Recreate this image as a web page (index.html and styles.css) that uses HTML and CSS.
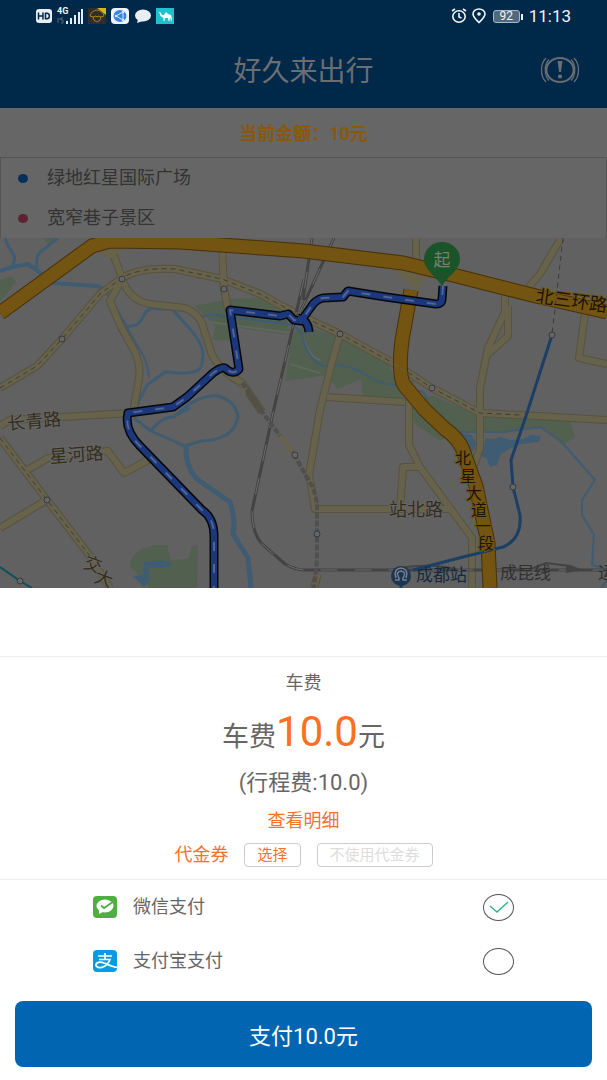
FILE: index.html
```html
<!DOCTYPE html>
<html lang="zh-CN">
<head>
    <meta charset="utf-8">
    <meta name="viewport" content="width=device-width, initial-scale=1">
    <title>好久来出行</title>
    <link rel="stylesheet" href="styles.css">
</head>
<body>
    <header class="top">
        <div class="status">
            <div class="status-left">
                <svg width="16" height="14" viewBox="0 0 16 14"><rect width="16" height="14" rx="3" fill="#e9eef3"/><path d="M2.5 3.5v7M7 3.5v7M2.5 7H7M9.5 4.2v5.6h1.3c3.4 0 3.4-5.6 0-5.6z" fill="none" stroke="#002848" stroke-width="1.5"/></svg>
                <div class="signal">
                    <span class="net">4G</span>
                    <svg width="26" height="15" viewBox="0 0 26 15"><path d="M10 15v-3M14 15V9M18 15V6M22 15V3M25 15V0" stroke="#e9eef3" stroke-width="2"/><path d="M1 9v5M3 9v2M6 9H4v2h2v3H4" fill="none" stroke="#53677a"/></svg>
                </div>
                <svg width="18" height="16" viewBox="0 0 18 16"><rect width="18" height="16" fill="#302d2b"/><path d="M9 0h9v7z" fill="#d9b51c"/><path d="M2 8q1-5 7-6 6 1 7 6l-3 1q0 4-4 5-4-1-4-5zM5 9l3-1 1 1 1-1 3 1" fill="none" stroke="#a8811d"/></svg>
                <svg width="18" height="16" viewBox="0 0 18 16"><rect width="18" height="16" rx="4" fill="#f1f5fb"/><ellipse cx="9" cy="8" rx="6.500" ry="6" fill="#3a83e8"/><path d="M5 8l7-4v8z" fill="none" stroke="#d5e6ff"/><g fill="#d5e6ff"><circle cx="5" cy="8" r="1.300"/><circle cx="12" cy="4" r="1.300"/><circle cx="12" cy="12" r="1.300"/></g></svg>
                <svg width="17" height="15" viewBox="0 0 17 15"><ellipse cx="9" cy="6.500" rx="8" ry="6" fill="#e9eef3"/><path d="M4 10l-1 4 6-2z" fill="#e9eef3"/></svg>
                <svg width="18" height="16" viewBox="0 0 18 16"><rect width="18" height="16" fill="#1cc3cf"/><path d="M2 5l2-1 1 1 1 2 2 0 2-3 2 2 3 1 1 4-1 3-.500-4-1 1v2h-1l-.500-3-3 0-.500 3h-1l0-3-3-2-1-3z" fill="#fff"/></svg>
            </div>
            <div class="status-right">
                <svg width="16" height="16" viewBox="0 0 16 16" fill="none" stroke="#f2f5f8" stroke-width="1.600"><ellipse cx="8" cy="8.500" rx="6.200" ry="5.700"/><path d="M8 5v4l2.500 1M1 3l3-2M15 3l-3-2"/></svg>
                <svg width="14" height="16" viewBox="0 0 14 16"><path d="M7 14.500C4 11.500 1 9 1 6a6 5 0 0 1 12 0c0 3-3 5.500-6 8.500z" fill="none" stroke="#f2f5f8" stroke-width="1.600"/><circle cx="7" cy="6" r="1.800" fill="#f2f5f8"/></svg>
                <div class="battery">92</div>
                <time>11:13</time>
            </div>
        </div>
        <div class="titlebar">
            <h1>好久来出行</h1>
            <button class="alert" type="button" aria-label="安全提示">
                <svg width="40" height="28" viewBox="0 0 40 28"><g fill="none" stroke="#6a6e72"><ellipse cx="20" cy="14" rx="13.500" ry="12" stroke-width="1.800"/><path d="M6 2C0 8 0 20 6 26M9 3.500C4 9 4 19 9 24.500M34 2c6 6 6 18 0 24M31 3.500c5 5.500 5 15.500 0 21" stroke-width="1.300"/></g><path d="M17.500 5h5l-1.500 11h-2z" fill="#6a6e72"/><ellipse cx="20" cy="20.500" rx="2.200" ry="2" fill="#6a6e72"/></svg>
            </button>
        </div>
    </header>

    <p class="current">当前金额：10元</p>
    <ul class="stops">
        <li class="from">绿地红星国际广场</li>
        <li class="to">宽窄巷子景区</li>
    </ul>

    <svg class="map" viewBox="0 238 607 350" role="img" aria-label="行程路线">
        <!-- parks -->
        <g fill="#51604f">
            <path d="M195 306l35-7 33-1 22 12 5 25-56-8 4 14-25-1 2-14z"/>
            <path d="M293 333l10-7 37 11 46 24 12 22 5 16-40-1-2-19-24 10-9-14-43 6z"/>
            <path d="M405 400l28-4 30 13 20 7 87 4 5 17-12 8-23-18-37 5-43 0-20 9-26-18z"/>
            <path d="M130 566c0-14 16-22 37-21l4 15 17-1 4-13 6-1-1 43h-47z"/>
            <path d="M42 238h14l-6 7zM0 280l12-4 4 6-16 20z"/>
        </g>
        <path d="M209 322l82 11M290 364l30 9M303 336q6 22 18 24" fill="none" stroke="#606760" stroke-width="2"/>

        <!-- water -->
        <g fill="none" stroke="#3f5c72" stroke-linejoin="round">
            <path d="M0 271l12-4 16-3 10 7 14 12 46 3 10 8" stroke-width="4"/>
            <path d="M5 238q2 8 7 14t0 14M37 268q-2-14 6-18l15-12" stroke-width="3"/>
            <path d="M108 294l10 18 8 14q12 2 17-9t14-8h15l18 20q14 16 13 28t-6 14q-12 3-20 2t-12-1l-18 13-10 20" stroke-width="3"/>
            <path d="M126 326l14 24q8 12 9 28M200 317q14-4 22-1l66 8q14 4 16 18 6 20 20 24 22-4 42 9t40 9" stroke-width="2"/>
            <path d="M173 418q24-24 45-22 18 5 20 21-4 23-37 24l-16 5-34-15-17-13M151 431q10-14 22-14l17-9" stroke-width="3"/>
            <path d="M186 447q0 25 15 35l29 20q6 18 3 32l15 24 3 30" stroke-width="5"/>
            <path d="M412 392q12-4 14 5v8M460 432h43l37-5 20 13 35 40-13 20v15l12 20-2 30 15 4M607 581l-6 7" stroke-width="2"/>
        </g>
        <g fill="#3f5c72">
            <path d="M460 433l12 2 5 10-6 8zM486 438l8 1 6-2 10 3 13-1 8-4 10 1-2 6-18 2-12 5-9 6-3 10-7 2-3-8-6-3z"/>
            <path d="M133 576l10-1 1-13 17-2 11 3-2 4-22 1 2 12-6 7z"/>
        </g>

        <!-- streets -->
        <g fill="none" stroke="#57533f" stroke-width="8" stroke-linejoin="round">
            <path d="M0 388l37-22 25-27 38-45 22-16q18-11 53-9l47 10 38 15 37 20 43 20 55 30 37 24 48 25 40 2 87 5"/>
            <path d="M110 245l12 33q6 22 28 26l35 4q16 6 19 22l8 25q10 18 30 28l20 29"/>
            <path d="M122 279l-12 22 10 24 15 27q6 14 4 26l-6 35M222 246l2 42 4 22M0 426l10-6 52-3 68-4M27 470l21-12 60-7 16 22 26-14M0 528l45-27"/>
            <path d="M0 438l47 62 43 56 20 32"/>
            <path d="M340 334l-7 24-13 52-11 65 6 34h136M327 397l78 5M409 380v65l11 22 52 71v50M420 467h-17l-3 42"/>
            <path d="M416 238v30M561 238l-21 36-12 14M505 296v16l-17 36-8 40v60l-7 20M508 306v30l-20 18M585 314l-6 44 28 6M318 574l-4 14"/>
        </g>
        <g fill="none" stroke="#67624b" stroke-width="6" stroke-linejoin="round">
            <path d="M0 388l37-22 25-27 38-45 22-16q18-11 53-9l47 10 38 15 37 20 43 20 55 30 37 24 48 25 40 2 87 5"/>
            <path d="M110 245l12 33q6 22 28 26l35 4q16 6 19 22l8 25q10 18 30 28l4 11"/>
            <path d="M122 279l-12 22 10 24 15 27q6 14 4 26l-6 35M222 246l2 42 4 22M0 426l10-6 52-3 68-4M27 470l21-12 60-7 16 22 26-14M0 528l45-27"/>
            <path d="M0 438l47 62 43 56 20 32"/>
            <path d="M340 334l-7 24-13 52-11 65 6 34h136M327 397l78 5M409 380v65l11 22 52 71v50M420 467h-17l-3 42"/>
            <path d="M416 238v30M561 238l-21 36-12 14M505 296v16l-17 36-8 40v60l-7 20M508 306v30l-20 18M585 314l-6 44 28 6M318 574l-4 14"/>
        </g>
        <path d="M0 388l37-22 25-27 38-45 22-16q18-11 53-9l47 10 38 15 37 20 43 20 55 30 37 24 48 25 40 2M0 438l47 62 43 56" fill="none" stroke="#3d3c38" stroke-dasharray="5 4"/>

        <!-- railways -->
        <g fill="none" stroke="#434343" stroke-width="3">
            <path d="M312 238l-9 62M334 238l-33 72M304 279l-31 134-21 98q0 22 10 33l23 20q10 6 20 6h302"/>
            <path d="M390 570q35-8 65-1M528 570l18-7 24 3 10 4" stroke-width="2"/>
        </g>
        <path d="M312 238l-9 62M334 238l-33 72M304 279l-31 134-21 98q0 22 10 33l23 20q10 6 20 6h302" fill="none" stroke="#6c6c6c" stroke-dasharray="17 17"/>
        <path d="M566 566l18 4-18 3z" fill="#434343"/>
        <path d="M242 383l20 29 32 42 12 22q11 16 11 32v52l-3 28" fill="none" stroke="#4f4f4f" stroke-width="4" stroke-dasharray="6 2"/>
        <path d="M280 436l12 16" fill="none" stroke="#67624b" stroke-width="5"/>

        <!-- trunk roads -->
        <g fill="none" stroke-linejoin="round">
            <path d="M385 257l50 7-19 24zM92 244h36l-18 12z" fill="#67624b" stroke="#67624b" stroke-width="5"/>
            <path d="M0 313l92-67 18-5 70 1 124 9 99 12 50 12 83 21 71 16M411 290l-9 50q-4 35 2 45l21 25 20 19q16 11 20 27l11 30 12 57 2 45" stroke="#49300a" stroke-width="15"/>
            <path d="M0 313l92-67 18-5 70 1 124 9 99 12 50 12 83 21 71 16M411 290l-9 50q-4 35 2 45l21 25 20 19q16 11 20 27l11 30 12 57 2 45" stroke="#735410" stroke-width="13"/>
            <path d="M394 364l14 9" stroke="#67624b" stroke-dasharray="5 3"/>
        </g>

        <!-- metro lines -->
        <g fill="none" stroke-width="3">
            <path d="M552 335l-26 81-15 44 2 27 7 28q2 24-17 32l-40 10-50 13M401 585v3" stroke="#1c3f66"/>
            <path d="M0 567l20 14 12 7" stroke="#0d505c" stroke-width="2"/>
            <path d="M563 238l-11 97" stroke="#3c3c3c" stroke-width="1" stroke-dasharray="5 4"/>
        </g>
        <g fill="#666" stroke="#353a42">
            <circle cx="122" cy="279" r="3"/><circle cx="62" cy="339" r="3"/><circle cx="224" cy="289" r="3"/><circle cx="340" cy="334" r="3"/>
            <circle cx="432" cy="388" r="3"/><circle cx="552" cy="335" r="3"/><circle cx="47" cy="500" r="3"/><circle cx="20" cy="581" r="3"/>
            <circle cx="295" cy="455" r="3"/><circle cx="317" cy="534" r="3"/><circle cx="513" cy="487" r="3"/>
        </g>

        <!-- driven route -->
        <g fill="none" stroke-linejoin="round">
            <path d="M443 286l-1 13q0 5-6 5l-50-7-38-6-5 6-20 1q-8 2-12 9l-10 14-7-1-6-6-8 2-50-6 9 59q-6 7-14-1-4-1-12 5l-26 24-14 10-45 6q-4 17 12 33l62 64q12 8 12 26v56M298 318q10 2 11 14" stroke="#05070c" stroke-width="9"/>
            <path d="M443 286l-1 13q0 5-6 5l-50-7-38-6-5 6-20 1q-8 2-12 9l-10 14-7-1-6-6-8 2-50-6 9 59q-6 7-14-1-4-1-12 5l-26 24-14 10-45 6q-4 17 12 33l62 64q12 8 12 26v56M298 318q10 2 11 14" stroke="#1b387c" stroke-width="6"/>
            <path d="M443 286l-1 13q0 5-6 5l-50-7-38-6-5 6-20 1q-8 2-12 9l-10 14-7-1-6-6-8 2-50-6 9 59q-6 7-14-1-4-1-12 5l-26 24-14 10-45 6q-4 17 12 33l62 64q12 8 12 26v56" stroke="#53648f" stroke-width="2" stroke-dasharray="9 13"/>
        </g>

        <!-- names -->
        <g class="road">
            <text x="8" y="430" transform="rotate(-5 8 430)">长青路</text>
            <text x="50" y="463" transform="rotate(-4 50 463)">星河路</text>
            <text x="389" y="516">站北路</text>
            <text x="84" y="571" transform="rotate(20 93 565)">交</text>
            <text x="95" y="585" transform="rotate(20 104 578)">大</text>
        </g>
        <g class="road trunk">
            <text x="535" y="302" transform="rotate(8 535 302)">北三环路</text>
        </g>
        <g class="road trunk stacked">
            <text x="463" y="464">北</text>
            <text x="468" y="482">星</text>
            <text x="474" y="499">大</text>
            <text x="479" y="516">道</text>
            <text x="483" y="532">一</text>
            <text x="486" y="549">段</text>
        </g>
        <text class="rail" x="500" y="579">成昆线</text>
        <text class="rail" x="598" y="579">运</text>
        <text class="station" x="416" y="581">成都站</text>
        <circle cx="401" cy="576" r="10" fill="#1b3552"/>
        <path d="M395 580h4v-2q-4-6 2-7 6 1 2 7v2h4M396 578q-3-9 5-10 8 1 5 10" fill="none" stroke="#777e87" stroke-width="1.500"/>

        <path d="M442 286c-6-10-18-16-18-27a18 17 0 0 1 36 0c0 11-12 17-18 27z" fill="#1b5429"/>
        <text class="pin" x="442" y="266">起</text>
    </svg>

    <form class="sheet">
        <section class="fare">
            <h2>车费</h2>
            <p class="total">车费<strong>10.0</strong>元</p>
            <p class="trip">(行程费:10.0)</p>
            <a class="detail" href="#">查看明细</a>
            <div class="coupon">
                <span>代金券</span>
                <button type="button">选择</button>
                <button type="button" class="off">不使用代金券</button>
            </div>
        </section>
        <section class="methods">
            <label class="method">
                <svg width="24" height="22" viewBox="0 0 24 22"><rect width="24" height="22" rx="4" fill="#4caf3f"/><ellipse cx="12" cy="10" rx="8.500" ry="6.500" fill="#fff"/><path d="M6 14v4l4-2z" fill="#fff"/><path d="M8 9.500l3 2.500 8-5.500" fill="none" stroke="#4caf3f" stroke-width="1.800"/></svg>
                <span class="name">微信支付</span>
                <span class="pick">
                    <input type="radio" name="pay" value="wechat" checked>
                    <svg width="20" height="12" viewBox="0 0 20 12"><path d="M1 5l7 6L19 1" fill="none" stroke="#2fb583" stroke-width="1.400"/></svg>
                </span>
            </label>
            <label class="method">
                <svg width="24" height="22" viewBox="0 0 24 22"><rect width="24" height="22" rx="4" fill="#0a9be6"/><path d="M5 6h14M12 3v6M6 9.500h11q-2 5-6 7c-4 2-8 1-8-1.500 0-3 4-3.500 8-2 4 1.500 7 3.500 13 4.500" fill="none" stroke="#fff" stroke-width="1.700"/></svg>
                <span class="name">支付宝支付</span>
                <span class="pick">
                    <input type="radio" name="pay" value="alipay">
                    <svg width="20" height="12" viewBox="0 0 20 12"><path d="M1 5l7 6L19 1" fill="none" stroke="#2fb583" stroke-width="1.400"/></svg>
                </span>
            </label>
        </section>
        <button class="pay" type="submit">支付10.0元</button>
    </form>
</body>
</html>
```

FILE: styles.css
```css
* {
    box-sizing: border-box;
}
body {
    margin: 0;
    background-color: #fff;
    color: #666;
    font-family: Roboto, "Noto Sans CJK SC", sans-serif;
    font-size: 18px;
    line-height: 24px;
}
h1, h2, p, ul {
    margin: 0;
    padding: 0;
    font-weight: normal;
}
button {
    font-family: inherit;
    cursor: pointer;
}
svg {
    display: block;
    flex: none;
}

/* header */
.top {
    height: 108px;
    background-color: #002848;
}
.status {
    display: flex;
    justify-content: space-between;
    align-items: center;
    height: 32px;
    padding: 0 36px;
    color: #f2f5f8;
}
.status-left, .status-right {
    display: flex;
    align-items: center;
    gap: 5px;
}
.signal {
    position: relative;
}
.net {
    position: absolute;
    top: -2px;
    left: 0;
    font-size: 9px;
    line-height: 9px;
    font-weight: bold;
}
.battery {
    position: relative;
    width: 27px;
    margin: 0 4px 0 2px;
    border: 1px solid #a9b8c5;
    border-radius: 3px;
    background-color: #51697f;
    font-size: 12px;
    line-height: 11px;
    text-align: center;
}
.battery::after {
    content: "";
    position: absolute;
    top: 3px;
    right: -4px;
    width: 2px;
    height: 6px;
    background-color: #e9eef3;
}
.status time {
    font-size: 17px;
}
.titlebar {
    display: grid;
    grid-template-columns: 1fr auto 1fr;
    align-items: center;
    height: 76px;
    padding: 0 27px;
}
.titlebar h1 {
    grid-column: 2;
    padding-top: 4px;
    color: #6a6e72;
    font-size: 28px;
    line-height: 32px;
}
.alert {
    justify-self: end;
    padding: 0;
    border: none;
    background: none;
}

/* trip info */
.current {
    padding: 14px 0 11px;
    background-color: #666;
    color: #8a580d;
    font-weight: bold;
    text-align: center;
}
.stops {
    border: 1px solid #555;
    border-bottom: none;
    background-color: #666;
    list-style: none;
}
.stops li {
    display: flex;
    align-items: center;
    gap: 19px;
    height: 40px;
    padding-left: 17px;
    color: #333;
}
.stops li::before {
    content: "";
    width: 10px;
    height: 9px;
    border-radius: 50%;
    background-color: #01305a;
}
.stops .to::before {
    background-color: #5c2233;
}

/* map */
.map {
    width: 100%;
    background-color: #616161;
}
.road {
    fill: #352d1c;
    stroke: #666;
    stroke-width: 2px;
    paint-order: stroke;
    font-size: 18px;
}
.trunk {
    fill: #1c1403;
    stroke: #735410;
}
.stacked {
    font-size: 16px;
    text-anchor: middle;
}
.rail {
    fill: #303030;
    font-size: 17px;
}
.station {
    fill: #142941;
    font-size: 17px;
}
.pin {
    fill: #777f78;
    font-size: 17px;
    text-anchor: middle;
}

/* payment sheet */
.sheet {
    padding-top: 68px;
}
.fare {
    display: flex;
    flex-direction: column;
    align-items: center;
    padding: 14px 0 12px;
    border: solid #eee;
    border-width: 1px 0;
}
.fare h2 {
    font-size: 18px;
}
.total {
    margin-top: 13px;
    font-size: 27px;
    line-height: 48px;
}
.total strong {
    color: #ff6f22;
    font-size: 42px;
    font-weight: normal;
}
.trip {
    margin-top: 10px;
    font-size: 22px;
}
.detail {
    margin-top: 14px;
    color: #f4732b;
    text-decoration: none;
}
.coupon {
    display: flex;
    align-items: center;
    gap: 16px;
    margin-top: 10px;
    color: #f4732b;
}
.coupon button {
    height: 24px;
    padding: 0 12px;
    border: 1px solid #ccc;
    border-radius: 4px;
    background-color: #fff;
    color: #f4732b;
    font-size: 15px;
    line-height: 20px;
}
.coupon .off {
    color: #ddd;
}
.method {
    display: flex;
    align-items: center;
    gap: 16px;
    height: 54px;
    padding: 0 93px;
}
.name {
    flex: 1;
}
.pick {
    display: grid;
    place-items: center;
}
.pick input, .pick svg {
    grid-area: 1 / 1;
}
.pick input {
    appearance: none;
    width: 31px;
    height: 27px;
    margin: 0;
    border: 1px solid #555;
    border-radius: 50%;
}
.pick svg {
    visibility: hidden;
    pointer-events: none;
}
.pick input:checked + svg {
    visibility: visible;
}
.pay {
    display: block;
    width: calc(100% - 30px);
    height: 66px;
    margin: 13px 15px;
    border: none;
    border-radius: 8px;
    background-color: #0265b2;
    color: #fff;
    font-size: 22px;
}
```
